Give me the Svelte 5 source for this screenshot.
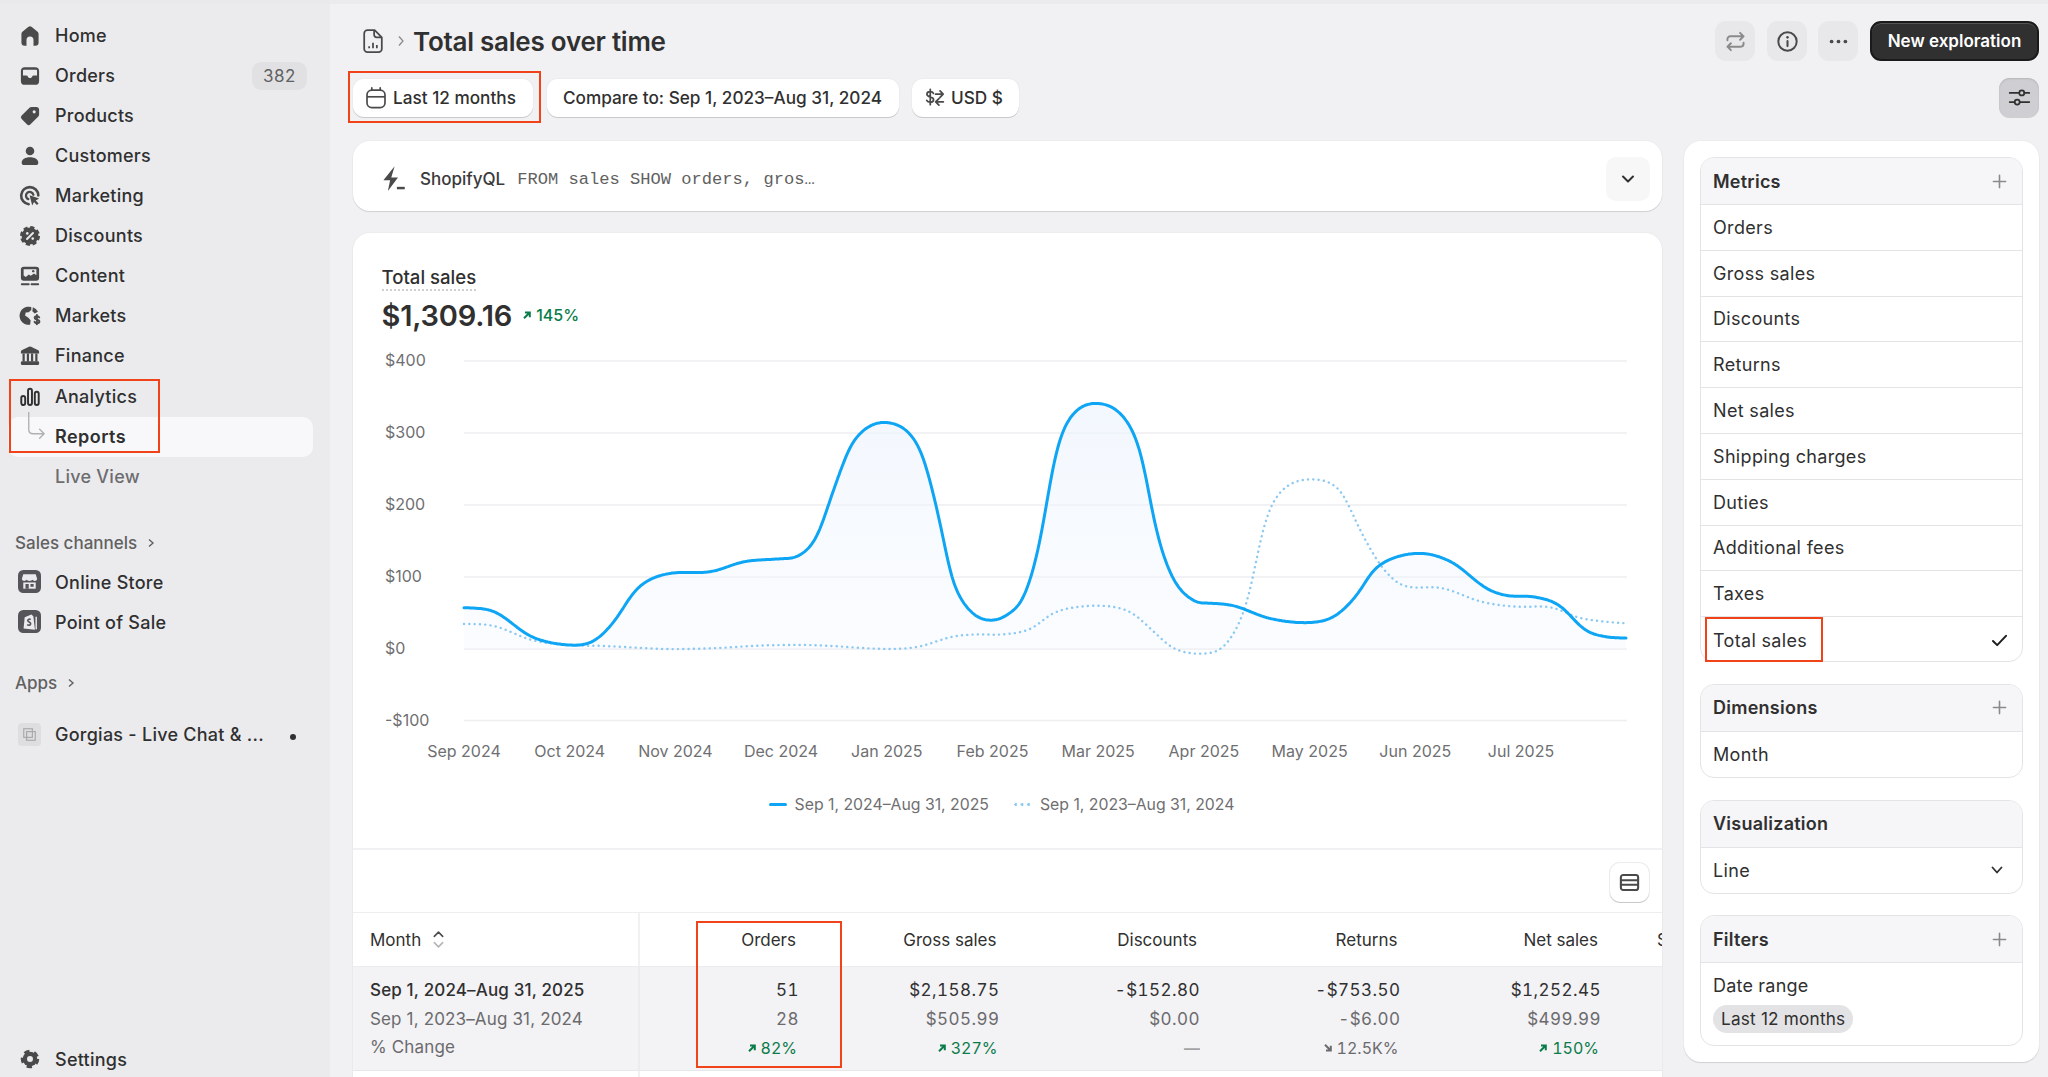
<script>
  const solid = [[464,607.3],[494.7,611.7],[531.4,636.7],[568,645],[592.7,641.7],[613,623],[637.6,588],[666,574],[711,571.7],[743.7,561.7],[780.4,558.7],[798.8,556],[817,536.7],[833.5,490],[854,440],[886.5,422.3],[919,446.7],[939.6,520],[952,580],[972,613],[992.6,620.5],[1010,613],[1024,597],[1039,546.7],[1056.4,450],[1073.7,413],[1098.9,403.3],[1123.6,416.7],[1141,453],[1156,530],[1173.5,580],[1195,601.7],[1208,603],[1234,605.7],[1269,618.3],[1308,622.7],[1334,616.7],[1355.6,596.7],[1377,566.7],[1416,553.3],[1451,561.7],[1485.7,588],[1507,595.7],[1533,596.7],[1559,605],[1585,630],[1607,637],[1626.6,638]];
  const dotted = [[464,623.7],[494.7,626],[531.4,640],[568,645],[605,646],[666,649],[711,648.3],[768,645.3],[817,645.3],[886.5,649],[919,646.7],[952,636.7],[980,634.3],[1000,634.7],[1030,629.3],[1056,611.7],[1099,605.7],[1130,611.7],[1152,630],[1173.5,648.3],[1201.6,653.7],[1225.5,645],[1247,603],[1264.5,523],[1282,490],[1311,479.3],[1340,490],[1360,530],[1381.6,566.7],[1403,585.7],[1442,588],[1481,601.7],[1516,606.7],[1551,607.3],[1581,618.3],[1626.6,623.7]];
  function curve(p) {
    const x0 = Math.ceil(p[0][0]), x1 = Math.floor(p[p.length - 1][0]);
    let ys = [];
    let seg = 0;
    for (let x = x0; x <= x1; x++) {
      while (seg < p.length - 2 && p[seg + 1][0] < x) seg++;
      const a = p[Math.max(seg - 1, 0)], b = p[seg], c = p[seg + 1], e = p[Math.min(seg + 2, p.length - 1)];
      const t = Math.min(1, Math.max(0, (x - b[0]) / (c[0] - b[0])));
      const h = c[0] - b[0];
      const m0 = (c[1] - a[1]) / (c[0] - a[0]) * h, m1 = (e[1] - b[1]) / (e[0] - b[0]) * h;
      const t2 = t * t, t3 = t2 * t;
      ys.push((2 * t3 - 3 * t2 + 1) * b[1] + (t3 - 2 * t2 + t) * m0 + (-2 * t3 + 3 * t2) * c[1] + (t3 - t2) * m1);
    }
    for (let pass = 0; pass < 3; pass++) {
      const r = 4;
      ys = ys.map((_, i) => {
        let s = 0, n = 0;
        for (let j = Math.max(0, i - r); j <= Math.min(ys.length - 1, i + r); j++) { s += ys[j]; n++; }
        return s / n;
      });
    }
    return 'M' + ys.map((y, i) => `${x0 + i} ${y.toFixed(1)}`).join('L');
  }
  const solidD = curve(solid);
  const dottedD = curve(dotted);
  const fillD = solidD + 'L1626 649L464 649Z';
  const grid = [['$400',361],['$300',433],['$200',505],['$100',577],['$0',649],['-$100',720.5]];
  const months = ['Sep 2024','Oct 2024','Nov 2024','Dec 2024','Jan 2025','Feb 2025','Mar 2025','Apr 2025','May 2025','Jun 2025','Jul 2025'];
  const nav = ['Home','Orders','Products','Customers','Marketing','Discounts','Content','Markets','Finance'];
  const metrics = ['Orders','Gross sales','Discounts','Returns','Net sales','Shipping charges','Duties','Additional fees','Taxes','Total sales'];
  const columns = [
    { h:'Orders', a:'51', b:'28', c:'82%', dir:'up' },
    { h:'Gross sales', a:'$2,158.75', b:'$505.99', c:'327%', dir:'up' },
    { h:'Discounts', a:'-$152.80', b:'$0.00', c:'—', dir:'flat' },
    { h:'Returns', a:'-$753.50', b:'-$6.00', c:'12.5K%', dir:'down' },
    { h:'Net sales', a:'$1,252.45', b:'$499.99', c:'150%', dir:'up' },
    { h:'Shipping charges', a:'', b:'', c:'', dir:'none' }
  ];
</script>

{#snippet navIcon(name)}
  <svg class="nav-ic" viewBox="0 0 20 20">
    {#if name === 'Home'}
      <path fill="#4a4a4a" d="M8.6 3.1a2.2 2.2 0 0 1 2.8 0l4.2 3.4c.7.5 1 1.2 1 2V15a2.5 2.5 0 0 1-2.5 2.5h-1.4V13a2.7 2.7 0 0 0-5.4 0v4.5H5.9A2.5 2.5 0 0 1 3.4 15V8.5c0-.8.3-1.5 1-2z"/>
    {:else if name === 'Orders'}
      <rect x="3" y="3.2" width="14" height="13.6" rx="3" fill="#4a4a4a"/>
      <path fill="#ebebee" d="M5.2 5.2h9.6a.6.6 0 0 1 .6.6v3.9h-2.6c-.6 0-1 .3-1.2.8-.3.6-.9 1-1.6 1s-1.3-.4-1.6-1c-.2-.5-.6-.8-1.2-.8H4.6V5.8a.6.6 0 0 1 .6-.6z"/>
    {:else if name === 'Products'}
      <path fill="#4a4a4a" d="M11.2 3h3.9A2 2 0 0 1 17 5v3.9c0 .6-.2 1.1-.6 1.5l-6 6a2 2 0 0 1-2.8 0l-4-4a2 2 0 0 1 0-2.8l6-6c.5-.4 1-.6 1.6-.6z"/>
      <circle cx="13.2" cy="6.8" r="1.2" fill="#ebebee"/>
    {:else if name === 'Customers'}
      <circle cx="10" cy="6.2" r="3.3" fill="#4a4a4a"/>
      <path fill="#4a4a4a" d="M3.6 15.2c0-2.6 2.6-4.2 6.4-4.2s6.4 1.600 6.4 4.200c0 1.100-.8 1.800-1.800 1.800H5.400c-1 0-1.800-.7-1.800-1.800z"/>
    {:else if name === 'Marketing'}
      <path fill="none" stroke="#4a4a4a" stroke-width="2" stroke-linecap="round" d="M9 16.300A6.600 6.600 0 1 1 16.400 9.500"/>
      <path fill="none" stroke="#4a4a4a" stroke-width="1.800" stroke-linecap="round" d="M8.700 12.400A2.900 2.900 0 1 1 12.600 9"/>
      <path fill="#4a4a4a" d="M9.700 9.400l7.300 2.600-2.600 1.400 2.200 2.300-1.300 1.300-2.200-2.300-1.400 2.600z"/>
    {:else if name === 'Discounts'}
      <circle cx="10" cy="10" r="6.500" fill="#4a4a4a" stroke="#4a4a4a" stroke-width="2.400" stroke-dasharray="3.100 2" />
      <path stroke="#ebebee" stroke-width="1.500" stroke-linecap="round" d="M12.300 7.700l-4.600 4.600"/>
      <circle cx="7.900" cy="8" r="1" fill="#ebebee"/><circle cx="12.100" cy="12" r="1" fill="#ebebee"/>
    {:else if name === 'Content'}
      <rect x="3" y="2.800" width="14" height="10.800" rx="2.200" fill="#4a4a4a"/>
      <path fill="#ebebee" d="M5.100 4.800h9.800v4.700l-1.800-1.400-2.500 1.800-1.500-1-2.300 1.900-1.700-1.200z"/>
      <circle cx="12.500" cy="6.300" r=".9" fill="#4a4a4a"/>
      <path stroke="#4a4a4a" stroke-width="1.500" stroke-linecap="round" d="M3.700 16.300h5.300M11.200 16.300h5.100"/>
    {:else if name === 'Markets'}
      <path fill="#4a4a4a" d="M11 3.100v2.300l-2 1.700-2.300.2-.5 2.300 2.500 1.700 1.800 1.900-.4 3.500A7 7 0 1 1 11 3.100z"/>
      <path fill="#4a4a4a" d="M12.200 3.300a7 7 0 0 1 3.900 3.500l-2.500 1.300-1.800-1.700z"/>
      <path fill="none" stroke="#4a4a4a" stroke-width="1.500" stroke-linecap="round" d="M17.100 11.100c-.3-.6-1-.9-1.800-.9-1 0-1.700.5-1.700 1.300 0 1.800 3.600.8 3.600 2.700 0 .8-.8 1.300-1.800 1.300-.9 0-1.600-.4-1.900-1M15.300 9.200v7.200"/>
    {:else if name === 'Finance'}
      <path fill="#4a4a4a" d="M9.200 2.900a2 2 0 0 1 1.600 0l5.200 2.500c.6.300 1 .8 1 1.500V8H3V6.900c0-.7.400-1.200 1-1.500z"/>
      <path stroke="#4a4a4a" stroke-width="1.700" d="M5.100 8v6.200M8.400 8v6.200M11.600 8v6.200M14.900 8v6.200"/>
      <rect x="3" y="14" width="14" height="3" rx="1" fill="#4a4a4a"/>
    {/if}
  </svg>
{/snippet}

{#snippet delta(dir)}
  {#if dir === 'up'}
    <svg class="arrow" viewBox="0 0 10 10"><path fill="none" stroke="currentColor" stroke-width="2" d="M2 8.200L7.500 2.700M3 2.400h4.800v4.800"/></svg>
  {:else if dir === 'down'}
    <svg class="arrow" viewBox="0 0 10 10"><path fill="none" stroke="currentColor" stroke-width="2" d="M2 1.800L7.500 7.300M3 7.600h4.800V2.800"/></svg>
  {/if}
{/snippet}

{#snippet plus()}
  <svg class="plus" viewBox="0 0 16 16"><path stroke="#8a8a8a" stroke-width="1.700" stroke-linecap="round" d="M8 1.500v13M1.500 8h13"/></svg>
{/snippet}

<div class="app">
  <aside class="sidebar">
    <nav class="nav">
      {#each nav as n}
        <div class="row">
          {@render navIcon(n)}
          <span class="lbl">{n}</span>
          {#if n === 'Orders'}<span class="count">382</span>{/if}
        </div>
      {/each}
      <div class="row strong">
        <svg class="nav-ic" viewBox="0 0 20 20">
          <g fill="none" stroke="#303030" stroke-width="1.500"><rect x="3.300" y="9.200" width="3" height="7" rx="1.500"/><rect x="8.500" y="3.700" width="3" height="12.500" rx="1.500"/><rect x="13.700" y="6" width="3" height="10.200" rx="1.500"/></g>
        </svg>
        <span class="lbl">Analytics</span>
      </div>
      <div class="row selected">
        <svg class="connector" viewBox="0 0 22 32"><path fill="none" stroke="#b0b0b2" stroke-width="1.500" stroke-linecap="round" stroke-linejoin="round" d="M3 0v19c0 3 2 5 5 5h12M15 19l5 5-5 5"/></svg>
        <span class="lbl">Reports</span>
      </div>
      <div class="row sub"><span class="lbl">Live View</span></div>
    </nav>

    <div class="section-title sc">Sales channels <svg class="chev" viewBox="0 0 10 10"><path fill="none" stroke="#616161" stroke-width="1.400" d="M3 1.500L7 5 3 8.500"/></svg></div>
    <div class="row tight">
      <svg class="app-ic" viewBox="0 0 24 24"><rect width="24" height="24" rx="5.500" fill="#56565a"/><path fill="#ebebee" d="M5.500 4.500h13l1.500 5c-.4 1.400-1.300 2-2.500 2-1 0-1.800-.4-2.500-1.200-.6.800-1.500 1.200-3 1.200s-2.400-.4-3-1.200c-.7.800-1.500 1.200-2.500 1.200-1.200 0-2.100-.6-2.500-2z"/><path fill="#ebebee" d="M5.500 13h13v6.500h-13z"/><path fill="#56565a" d="M7.800 14.500h3.400v5H7.800zM13 14.500h3.300v3H13z"/></svg>
      <span class="lbl">Online Store</span>
    </div>
    <div class="row tight">
      <svg class="app-ic" viewBox="0 0 24 24"><rect width="24" height="24" rx="5.500" fill="#56565a"/><path fill="#ebebee" d="M7 7.500l7-2.800 2 1.800 1.700 14-11.900-1.200z"/><path fill="none" stroke="#56565a" stroke-width="1.700" d="M13.200 10c-.8-.7-3-.6-3 1 0 1.700 3 1.300 3 3.300 0 1.600-2.200 2-3.700 1"/><path stroke="#ebebee" stroke-width="1.500" d="M19 7v13"/></svg>
      <span class="lbl">Point of Sale</span>
    </div>

    <div class="section-title apps">Apps <svg class="chev" viewBox="0 0 10 10"><path fill="none" stroke="#616161" stroke-width="1.400" d="M3 1.500L7 5 3 8.500"/></svg></div>
    <div class="row tight gorgias">
      <svg class="app-ic" viewBox="0 0 24 24"><rect width="24" height="24" rx="4" fill="#dedee0"/><g fill="none" stroke="#a8a8aa" stroke-width="1.200"><rect x="6" y="6" width="9" height="9"/><rect x="9" y="9" width="9" height="9"/></g></svg>
      <span class="lbl">Gorgias - Live Chat &amp; ...</span>
      <span class="dot"></span>
    </div>

    <div class="row settings">
      <svg class="nav-ic" viewBox="0 0 20 20"><circle cx="10" cy="10" r="5.600" fill="#4a4a4a" stroke="#4a4a4a" stroke-width="3" stroke-dasharray="3.800 3.530"/><circle cx="10" cy="10" r="2.300" fill="#ebebee"/></svg>
      <span class="lbl">Settings</span>
    </div>
  </aside>

  <main class="main">
    <header class="top">
      <svg class="doc" viewBox="0 0 20 24"><path fill="none" stroke="#4a4a4a" stroke-width="1.600" stroke-linejoin="round" d="M2 5a3 3 0 0 1 3-3h6.500L18 8.500V19a3 3 0 0 1-3 3H5a3 3 0 0 1-3-3zM11 2.500V6a2.500 2.500 0 0 0 2.500 2.500H17.500"/><path stroke="#4a4a4a" stroke-width="1.600" d="M6.500 18.500v-2M10 18.500v-5M13.500 18.500v-3"/></svg>
      <svg class="crumb" viewBox="0 0 8 14"><path fill="none" stroke="#8a8a8a" stroke-width="1.300" d="M2 2.500L6 7l-4 4.500"/></svg>
      <h1>Total sales over time</h1>
      <div class="actions">
        <button class="ghost" aria-label="Sync"><svg viewBox="0 0 20 20" class="act"><g fill="none" stroke="#8a8a8a" stroke-width="1.700" stroke-linecap="round" stroke-linejoin="round"><path d="M3 9V8a2.500 2.500 0 0 1 2.500-2.500H17M14 2.500l3 3-3 3"/><path d="M17 11v1a2.500 2.500 0 0 1-2.500 2.500H3M6 17.500l-3-3 3-3"/></g></svg></button>
        <button class="ghost g2" aria-label="Info"><svg viewBox="0 0 20 20" class="act"><circle cx="10" cy="10" r="8" fill="none" stroke="#4a4a4a" stroke-width="1.700"/><path stroke="#4a4a4a" stroke-width="1.800" stroke-linecap="round" d="M10 9.500v4.500"/><circle cx="10" cy="6.400" r="1.100" fill="#4a4a4a"/></svg></button>
        <button class="ghost" aria-label="More"><svg viewBox="0 0 20 20" class="act"><g fill="#4a4a4a"><circle cx="4" cy="10" r="1.600"/><circle cx="10" cy="10" r="1.600"/><circle cx="16" cy="10" r="1.600"/></g></svg></button>
        <button class="primary">New exploration</button>
      </div>
    </header>

    <div class="filters">
      <button class="pill first">
        <svg viewBox="0 0 20 20" class="cal"><g fill="none" stroke="#4a4a4a" stroke-width="1.400"><rect x="2.500" y="3.500" width="15" height="14.500" rx="4"/><path d="M2.500 9h15"/><path stroke-linecap="round" d="M6.500 1.500v2M13.500 1.500v2"/></g></svg>
        Last 12 months
      </button>
      <button class="pill second">Compare to: Sep 1, 2023–Aug 31, 2024</button>
      <button class="pill third">
        <svg viewBox="0 0 20 20" class="cur"><path fill="none" stroke="#4a4a4a" stroke-width="1.600" stroke-linecap="round" d="M9.500 5.800C9 4.800 8 4.300 6.600 4.300 5 4.300 3.600 5 3.600 6.500c0 3.300 6 1.600 6 5 0 1.500-1.400 2.300-3 2.300-1.500 0-2.700-.6-3.200-1.700M6.600 2.200v13.900"/><path fill="none" stroke="#4a4a4a" stroke-width="1.600" stroke-linecap="round" stroke-linejoin="round" d="M11.500 6.500h6.500M15.500 3.500l2.800 3-2.800 3M18.500 13.500h-7M14.500 10.500l-3 3 3 3"/></svg>
        USD $
      </button>
      <button class="tune" aria-label="Settings"><svg viewBox="0 0 20 20" class="act"><g fill="none" stroke="#303030" stroke-width="1.500" stroke-linecap="round"><circle cx="12" cy="6" r="2.200"/><circle cx="8" cy="14" r="2.200"/><path d="M1.500 6h8M14.200 6h4.300M1.500 14h4.300M10.200 14h8.300"/></g></svg></button>
    </div>

    <div class="cols">
      <div class="left">
        <section class="card ql">
          <svg class="bolt" viewBox="0 0 22 24"><path fill="#4a4a4a" d="M12 1L2 13.500h6L6 23l9-12h-6z"/><path stroke="#4a4a4a" stroke-width="2.200" d="M14 20.500h7"/></svg>
          <span class="ql-name">ShopifyQL</span>
          <span class="ql-code">FROM sales SHOW orders, gros…</span>
          <button class="ql-btn" aria-label="Expand"><svg viewBox="0 0 16 16"><path fill="none" stroke="#303030" stroke-width="2" stroke-linecap="round" stroke-linejoin="round" d="M3 5.500l5 5 5-5"/></svg></button>
        </section>

        <section class="card report">
          <div class="kpi">
            <div class="kpi-title">Total sales</div>
            <div class="kpi-line">
              <span class="kpi-val">$1,309.16</span>
              <span class="kpi-delta">{@render delta('up')}145%</span>
            </div>
          </div>
          <svg class="chart" viewBox="353 345 1309 425">
            <defs>
              <linearGradient id="area" gradientUnits="userSpaceOnUse" x1="0" y1="403" x2="0" y2="649">
                <stop offset="0" stop-color="#eaf2fd" stop-opacity=".6"/>
                <stop offset="1" stop-color="#f2f7fe" stop-opacity=".35"/>
              </linearGradient>
            </defs>
            {#each grid as g}
              <line x1="464" x2="1627" y1={g[1]} y2={g[1]} stroke="#eeeef1" stroke-width="1.500"/>
              <text x="385" y={g[1] + 1} class="tick" dominant-baseline="middle">{g[0]}</text>
            {/each}
            <path d={fillD} fill="url(#area)"/>
            <path d={dottedD} fill="none" stroke="#8cc9f2" stroke-width="2.400" stroke-linecap="round" stroke-dasharray="0.100 5.200"/>
            <path d={solidD} fill="none" stroke="#0ea5f4" stroke-width="3" stroke-linecap="round"/>
            {#each months as m, i}
              <text x={464 + i * 105.7} y="752.500" class="tick" text-anchor="middle" dominant-baseline="middle">{m}</text>
            {/each}
          </svg>
          <div class="legend">
            <span class="lg"><i class="sw solid"></i>Sep 1, 2024–Aug 31, 2025</span>
            <span class="lg"><i class="sw dots"></i>Sep 1, 2023–Aug 31, 2024</span>
          </div>
          <div class="tbar">
            <button class="tbtn" aria-label="Table"><svg viewBox="0 0 20 20" class="act"><g fill="none" stroke="#4a4a4a" stroke-width="1.800"><rect x="2.500" y="3.500" width="15" height="13" rx="2"/><path d="M2.500 8h15M2.500 12h15"/></g></svg></button>
          </div>
          <div class="table">
            <div class="cell head first-col">Month
              <svg class="sort" viewBox="0 0 12 20"><path fill="none" stroke="#4a4a4a" stroke-width="1.500" stroke-linecap="round" stroke-linejoin="round" d="M2 7l4-4 4 4"/><path fill="none" stroke="#b5b5b5" stroke-width="1.500" stroke-linecap="round" stroke-linejoin="round" d="M2 13l4 4 4-4"/></svg>
            </div>
            {#each columns as c}<div class="cell head num">{c.h}</div>{/each}

            <div class="cell data first-col">
              <div class="ln b">Sep 1, 2024–Aug 31, 2025</div>
              <div class="ln m">Sep 1, 2023–Aug 31, 2024</div>
              <div class="ln m">% Change</div>
            </div>
            {#each columns as c}
              <div class="cell data num">
                <div class="ln">{c.a}</div>
                <div class="ln m">{c.b}</div>
                <div class="ln dl {c.dir}">{@render delta(c.dir)}<span>{c.c}</span></div>
              </div>
            {/each}
            <div class="cell tail first-col"></div>
          </div>
        </section>
      </div>

      <aside class="card panel">
        <div class="box">
          <div class="bh"><span>Metrics</span>{@render plus()}</div>
          {#each metrics as m}
            <div class="bi"><span>{m}</span>{#if m === 'Total sales'}<svg class="check" viewBox="0 0 18 14"><path fill="none" stroke="#1f1f1f" stroke-width="2.200" stroke-linecap="round" stroke-linejoin="round" d="M2 7.500L6.500 12 16 2"/></svg>{/if}</div>
          {/each}
        </div>
        <div class="box">
          <div class="bh"><span>Dimensions</span>{@render plus()}</div>
          <div class="bi"><span>Month</span></div>
        </div>
        <div class="box">
          <div class="bh"><span>Visualization</span></div>
          <div class="bi"><span>Line</span><svg class="caret" viewBox="0 0 14 14"><path fill="none" stroke="#303030" stroke-width="1.800" stroke-linecap="round" stroke-linejoin="round" d="M2.500 4.500L7 9.500l4.500-5"/></svg></div>
        </div>
        <div class="box">
          <div class="bh"><span>Filters</span>{@render plus()}</div>
          <div class="filter-body">
            <div>Date range</div>
            <span class="chip">Last 12 months</span>
          </div>
        </div>
      </aside>
    </div>
  </main>

  <div class="mark m1"></div>
  <div class="mark m2"></div>
  <div class="mark m3"></div>
  <div class="mark m4"></div>
  <div class="topline"></div>
</div>

<style>
  :global(body) { margin: 0; background: #f1f0f3; }
  .app { position: relative; display: flex; width: 2048px; height: 1077px; overflow: hidden; background: #f1f0f3; color: #303030; font-family: Inter, "Noto Sans", sans-serif; font-size: 17px; }
  button { font-family: inherit; padding: 0; border: 0; cursor: pointer; color: inherit; }
  svg { display: block; flex: none; }
  .topline { position: absolute; left: 0; top: 0; width: 100%; height: 4px; background: #e8e8ea; opacity: .7; }

  .sidebar { width: 330px; flex: none; height: 1077px; box-sizing: border-box; background: #ebebee; padding-top: 15.500px; display: flex; flex-direction: column; }
  .row { display: flex; align-items: center; height: 40px; padding-left: 55px; position: relative; font-weight: 500; font-size: 18px; letter-spacing: .25px; }
  .nav-ic { position: absolute; left: 16.500px; top: 7px; width: 26px; height: 26px; }
  .count { position: absolute; left: 252px; width: 55px; height: 28px; border-radius: 9px; background: #e1e1e4; color: #616161; font-size: 17px; font-weight: 400; display: flex; align-items: center; justify-content: center; letter-spacing: .6px; }
  .strong { margin-top: 1px; }
  .strong .lbl { color: #303030; }
  .selected::before { content: ""; position: absolute; left: 8px; top: 0; width: 305px; height: 40px; border-radius: 10px; background: #f8f8fa; }
  .selected .lbl { position: relative; font-weight: 600; letter-spacing: .45px; }
  .connector { position: absolute; left: 26px; top: -5px; width: 20px; height: 29px; z-index: 1; }
  .sub .lbl { color: #6d6d70; }
  .section-title { display: flex; align-items: center; gap: 9px; padding-left: 15px; color: #616161; font-size: 17px; font-weight: 500; height: 24px; }
  .chev { width: 10px; height: 10px; }
  .sc { margin-top: 34px; margin-bottom: 7.500px; }
  .apps { margin-top: 28.500px; margin-bottom: 20px; }
  .tight { height: 40px; }
  .app-ic { position: absolute; left: 18px; top: 8px; width: 23px; height: 23px; }
  .dot { position: absolute; left: 290px; top: 19px; width: 6px; height: 6px; border-radius: 50%; background: #303030; }
  .settings { margin-top: auto; margin-bottom: -2px; }

  .main { flex: 1; padding: 21px 9px 0 23px; min-width: 0; }
  .top { display: flex; align-items: center; height: 40px; }
  .doc { width: 22px; height: 26.400px; margin-left: 9px; }
  .crumb { width: 8px; height: 14px; margin-left: 13px; }
  h1 { margin: 0 0 0 8px; font-size: 26px; font-weight: 600; letter-spacing: -.25px; }
  .actions { margin-left: auto; display: flex; align-items: center; }
  .ghost { width: 40px; height: 40px; border-radius: 11px; background: #e8e8ea; margin-right: 12px; display: flex; align-items: center; justify-content: center; }
  .g2 { margin-right: 11px; }
  .act { width: 23px; height: 23px; }
  .primary { width: 169px; height: 40px; box-sizing: border-box; border-radius: 11px; background: #303030; border: 2px solid #1a1a1a; color: #fff; font-size: 17px; font-weight: 600; box-shadow: inset 0 1px 0 #555; }

  .filters { display: flex; align-items: center; gap: 13px; margin-top: 17px; height: 39px; }
  .pill { height: 38px; box-sizing: border-box; padding: 0 16px; background: #fff; border-radius: 11px; font-size: 17.200px; font-weight: 500; display: flex; align-items: center; box-shadow: 0 1px 0 #c9c9cc, 0 0 0 1px #ececee; white-space: nowrap; }
  .pill.first { width: 180px; padding-left: 11px; gap: 5px; margin-right: 1px; }
  .pill.second { width: 352px; }
  .pill.third { padding-left: 11px; gap: 6px; width: 107px; }
  .cal { width: 24px; height: 24px; }
  .cur { width: 22px; height: 22px; }
  .tune { margin-left: auto; width: 40px; height: 40px; border-radius: 11px; background: #cfcfd3; display: flex; align-items: center; justify-content: center; box-shadow: inset 0 1px 2px #b5b5b8; }

  .cols { display: flex; gap: 22px; margin-top: 24px; align-items: flex-start; }
  .left { width: 1309px; flex: none; display: flex; flex-direction: column; gap: 22px; }
  .card { background: #fff; border-radius: 17px; box-shadow: 0 1px 1px #d0d0d3, 0 0 0 1px #ededf0; }
  .ql { height: 70px; box-sizing: border-box; padding-top: 6px; display: flex; align-items: center; padding-left: 28px; position: relative; }
  .bolt { width: 25px; height: 27px; margin-top: -2px; }
  .ql-name { margin-left: 14px; font-weight: 500; font-size: 17px; color: #3a3a3a; }
  .ql-code { margin-left: 12px; font-family: "Liberation Mono", monospace; font-size: 17.100px; color: #616161; }
  .ql-btn { position: absolute; right: 12px; top: 16px; width: 44px; height: 44px; border-radius: 10px; background: #f7f7f8; display: flex; align-items: center; justify-content: center; }
  .ql-btn svg { width: 16px; height: 16px; }

  .report { height: 900px; overflow: hidden; }
  .kpi { padding: 32px 0 0 28.500px; }
  .kpi-title { display: inline-block; font-weight: 500; font-size: 18.600px; line-height: 24px; height: 24px; border-bottom: 2px dotted #cfcfd2; }
  .kpi-line { display: flex; align-items: center; gap: 10px; margin-top: 7px; height: 34px; }
  .kpi-val { font-size: 29px; font-weight: 600; letter-spacing: -.2px; }
  .kpi-delta { display: flex; align-items: center; gap: 4px; color: #0a7c4a; font-size: 16px; font-weight: 500; }
  .arrow { width: 10px; height: 10px; }
  .chart { width: 1309px; height: 425px; margin-top: 13px; }
  .tick { font-family: Inter, sans-serif; font-size: 16px; fill: #6f6f72; }
  .legend { display: flex; justify-content: center; gap: 25px; height: 28px; margin-top: 20px; margin-right: 12px; color: #6f6f72; font-size: 15.800px; align-items: center; }
  .lg { display: flex; align-items: center; gap: 8px; }
  .sw { display: block; width: 18px; height: 3px; border-radius: 2px; }
  .solid { background: #0ea5f4; }
  .dots { background: radial-gradient(circle at 1.500px 1.500px, #8cc9f2 1.300px, transparent 1.500px) 0 0/6.500px 3px; }
  .tbar { margin-top: 30px; height: 65px; border-top: 2px solid #f1f1f3; border-bottom: 1px solid #eeeef0; box-sizing: border-box; position: relative; }
  .tbtn { position: absolute; left: 1257px; top: 13px; width: 39px; height: 39px; background: #fff; border-radius: 10px; display: flex; align-items: center; justify-content: center; box-shadow: 0 1px 0 #c9c9cc, 0 0 0 1px #ececee; }
  .table { display: grid; grid-template-columns: 287px 159px repeat(4, 200.500px) 199px; grid-auto-rows: min-content; width: 1700px; }
  .cell { box-sizing: border-box; }
  .head { height: 53px; display: flex; align-items: center; font-size: 17px; }
  .first-col { padding-left: 17px; border-right: 2px solid #f1f1f3; }
  .head.first-col { gap: 11px; }
  .sort { width: 13px; height: 21px; }
  .head.num { justify-content: flex-end; padding-right: 3px; white-space: nowrap; }
  .data { height: 105px; background: #f3f2f5; border-bottom: 1px solid #e8e8ea; border-top: 1px solid #ececee; padding-top: 9px; }
  .data.first-col { border-right-color: #ececee; }
  .ln { height: 28.500px; display: flex; align-items: center; font-size: 17px; letter-spacing: .15px; }
  .b { font-weight: 500; }
  .m { color: #6b6b6e; }
  .data.num { font-variant-numeric: tabular-nums; }
  .data.num .ln { justify-content: flex-end; font-variant-numeric: tabular-nums; letter-spacing: .45px; }
  .data.num .dl { padding-right: 2px; gap: 4px; font-size: 16px; height: 30px; letter-spacing: 0; }
  .dl.up { color: #0a7c4a; }
  .dl.down { color: #6b6b6e; }
  .data.num .dl.flat { color: #a3a3a6; font-weight: 700; font-size: 16px; padding-right: 0; }
  .tail { height: 10px; }

  .panel { width: 355px; flex: none; height: 921px; box-sizing: border-box; padding: 16px; display: flex; flex-direction: column; gap: 21.500px; }
  .box { border: 1px solid #e4e4e7; border-radius: 14px; overflow: hidden; }
  .bh { height: 46px; background: #f6f5f7; border-bottom: 1px solid #e4e4e7; display: flex; align-items: center; justify-content: space-between; padding: 0 12px 0 12px; font-weight: 600; font-size: 18px; letter-spacing: .25px; }
  .plus { width: 15px; height: 15px; margin-right: 3px; }
  .bi { height: 45.800px; box-sizing: border-box; border-bottom: 1px solid #e4e4e7; padding: 0 12px; display: flex; align-items: center; justify-content: space-between; font-size: 18px; letter-spacing: .33px; }
  .bi:last-child { border-bottom: 0; }
  .check { width: 17px; height: 13px; margin-right: 2px; }
  .caret { width: 14px; height: 14px; margin-right: 6px; }
  .filter-body { padding: 12px 12px 0; height: 82px; box-sizing: border-box; font-size: 18px; letter-spacing: .2px; }
  .chip { display: inline-block; margin-top: 9px; height: 28px; line-height: 28px; padding: 0 8px; border-radius: 14px; background: #e3e3e5; font-size: 17.200px; }

  .mark { position: absolute; border: 2px solid #f0431a; box-sizing: border-box; pointer-events: none; }
  .m1 { left: 9px; top: 379px; width: 151px; height: 74px; }
  .m2 { left: 348px; top: 71px; width: 193px; height: 52px; }
  .m3 { left: 696px; top: 921px; width: 146px; height: 147px; }
  .m4 { left: 1705px; top: 617px; width: 118px; height: 45px; }
</style>
